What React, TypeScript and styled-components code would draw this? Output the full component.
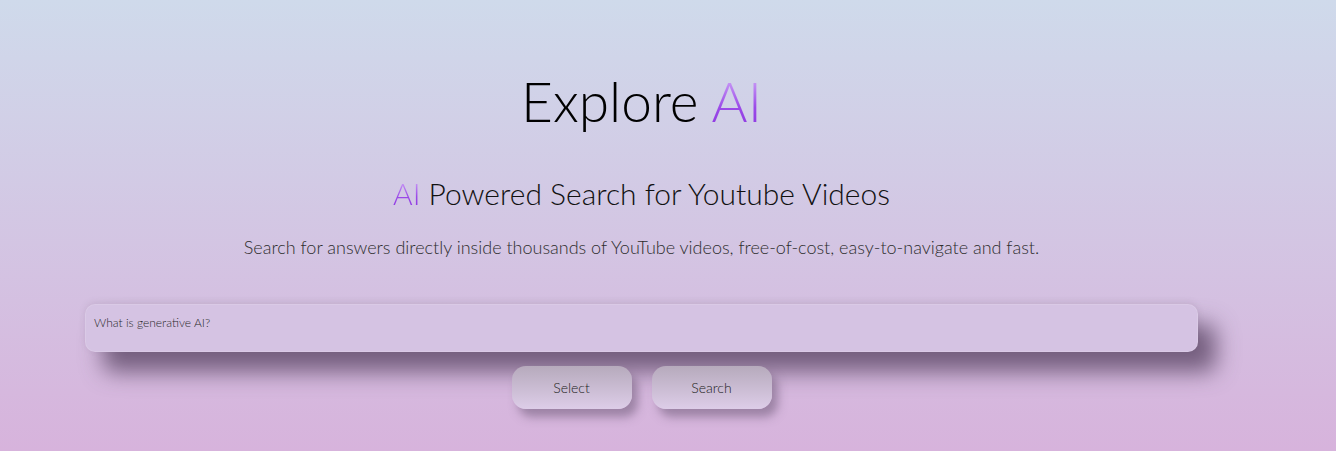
import React from "react";
import styled, { createGlobalStyle } from "styled-components";

const GlobalStyle = createGlobalStyle`
  html, body {
    margin: 0;
    padding: 0;
  }
  body {
    min-height: 100vh;
    background: linear-gradient(to bottom, #cfdaeb 0%, #d7b3dc 100%);
    font-family: Lato, "Open Sans", sans-serif;
    color: #111;
  }
`;

const App = () => {
  return (
    <>
      <GlobalStyle />
      <Main>
        <Title>
          Explore <Accent>AI</Accent>
        </Title>
        <Subtitle>
          <Accent>AI</Accent> Powered Search for Youtube Videos
        </Subtitle>
        <Desc>
          Search for answers directly inside thousands of YouTube videos,
          free-of-cost, easy-to-navigate and fast.
        </Desc>
        <QueryBox placeholder="What is generative AI?" />
        <ButtonRow>
          <PillButton>Select</PillButton>
          <PillButton>Search</PillButton>
        </ButtonRow>
      </Main>
    </>
  );
};

const Main = styled.main`
  display: flex;
  flex-direction: column;
  align-items: center;
  padding: 67px 138px 0 85px;
  height: 451px;
  box-sizing: border-box;
`;

const Title = styled.h1`
  margin: 0;
  font-size: 55px;
  font-weight: 300;
  line-height: 68px;
  color: #000;
`;

const Accent = styled.span`
  background: linear-gradient(to bottom, #dcbcfb 0%, #9b4ae8 60%, #8a33e0 100%);
  -webkit-background-clip: text;
  background-clip: text;
  color: transparent;
`;

const Subtitle = styled.h2`
  margin: 38px 0 0;
  font-size: 30px;
  font-weight: 300;
  line-height: 40px;
  color: #111;
`;

const Desc = styled.p`
  margin: 22px 0 0;
  font-size: 18px;
  font-weight: 300;
  line-height: 24px;
  color: #2e2e2e;
`;

const QueryBox = styled.textarea`
  margin-top: 45px;
  width: 1113px;
  height: 48px;
  box-sizing: border-box;
  padding: 10px 8px;
  border: 1px solid rgba(255, 255, 255, 0.12);
  border-radius: 10px;
  background: #d5c3e3;
  resize: none;
  outline: none;
  font-family: Lato, sans-serif;
  font-size: 12px;
  font-weight: 300;
  color: #333;
  box-shadow: 18px 20px 22px rgba(80, 60, 90, 0.72),
    0 -2px 6px rgba(120, 100, 130, 0.15);

  &::placeholder {
    color: #2a2a2a;
  }
`;

const ButtonRow = styled.div`
  display: flex;
  gap: 20px;
  margin-top: 14px;
`;

const PillButton = styled.button`
  width: 120px;
  height: 43px;
  border: none;
  border-radius: 14px;
  background: linear-gradient(to bottom, #b6aabc 0%, #ddcde8 100%);
  font-family: Lato, sans-serif;
  font-size: 14px;
  font-weight: 300;
  color: #222;
  box-shadow: 6px 8px 10px rgba(100, 80, 110, 0.5);
  cursor: pointer;
`;

export default App;
